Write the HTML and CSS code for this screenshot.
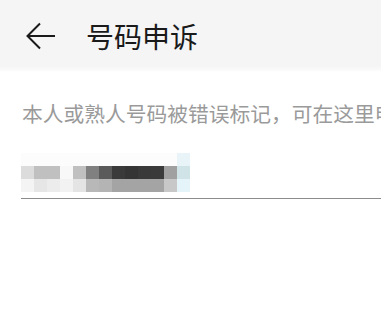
FILE: index.html
```html
<!DOCTYPE html>
<html lang="zh-CN">
<head>
<meta charset="utf-8">
<link rel="stylesheet" href="styles.css">
</head>
<body>
<header class="appbar">
  <svg class="back" width="30" height="28" viewBox="0 0 30 28">
    <path d="M14 1.5 L1.5 14 L14 26.5 M1.5 14 H29" fill="none" stroke="#1a1a1a" stroke-width="2" stroke-linejoin="miter"/>
  </svg>
  <h1 class="title">号码申诉</h1>
</header>
<main class="content">
  <p class="hint">本人或熟人号码被错误标记，可在这里申诉</p>
  <div class="field">
    <div class="mosaic">
      <i style="background:#fcfcfc"></i><i style="background:#fcfcfc"></i><i style="background:#fcfcfc"></i><i style="background:#fcfcfc"></i><i style="background:#fcfcfc"></i><i style="background:#fcfcfc"></i><i style="background:#fcfcfc"></i><i style="background:#fcfcfc"></i><i style="background:#fcfcfc"></i><i style="background:#fcfcfc"></i><i style="background:#fcfcfc"></i><i style="background:#fcfcfc"></i><i style="background:#e8f4f8"></i>
      <i style="background:#dcdcdc"></i><i style="background:#c0c0c0"></i><i style="background:#c0c0c0"></i><i style="background:#f8f8f8"></i><i style="background:#c0c0c0"></i><i style="background:#808080"></i><i style="background:#5a5a5a"></i><i style="background:#3a3a3a"></i><i style="background:#353535"></i><i style="background:#393939"></i><i style="background:#3a3a3a"></i><i style="background:#a0a0a0"></i><i style="background:#d0e4e8"></i>
      <i style="background:#f4f4f4"></i><i style="background:#e6e6e6"></i><i style="background:#ececec"></i><i style="background:#f2f2f2"></i><i style="background:#e4e4e4"></i><i style="background:#b8b8b8"></i><i style="background:#b4b4b4"></i><i style="background:#a4a4a4"></i><i style="background:#a4a4a4"></i><i style="background:#a4a4a4"></i><i style="background:#a4a4a4"></i><i style="background:#c8c8c8"></i><i style="background:#e4f4f8"></i>
    </div>
  </div>
</main>
</body>
</html>
```
FILE: styles.css
```css
html, body {
  margin: 0;
  padding: 0;
  background: #ffffff;
}
body {
  font-family: "Noto Sans CJK SC", "Noto Sans", sans-serif;
  width: 381px;
  height: 319px;
  overflow: hidden;
}
.appbar {
  height: 72px;
  background: linear-gradient(to bottom, #f5f5f5 0, #f5f5f5 66px, #fafafa 70px, #ffffff 72px);
  display: flex;
  align-items: center;
  padding-left: 26px;
  box-sizing: border-box;
}
.back {
  display: block;
  flex: none;
}
.title {
  margin: 0 0 0 30px;
  font-size: 28px;
  font-weight: 400;
  color: #1a1a1a;
  line-height: 1;
}
.content {
  padding: 0 0 0 21px;
}
.hint {
  margin: 27px 0 0 1px;
  font-size: 20.75px;
  line-height: 28px;
  color: #9a9a9a;
  white-space: nowrap;
  overflow: hidden;
}
.field {
  margin-top: 26px;
  padding-bottom: 6px;
  border-bottom: 1px solid #8c8c8c;
}
.mosaic {
  display: grid;
  grid-template-columns: repeat(13, 13px);
  grid-auto-rows: 13px;
}
.mosaic i {
  display: block;
}
```
